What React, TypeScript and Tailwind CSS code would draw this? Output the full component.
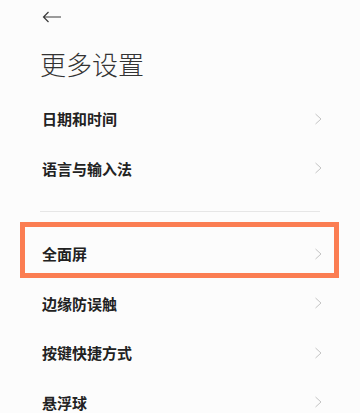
const font = { fontFamily: '"Noto Sans CJK SC", "Noto Sans", sans-serif' };

function Chevron() {
  return (
    <svg width="9" height="12" viewBox="0 0 9 12" fill="none" className="shrink-0">
      <path d="M1.5 1 L7 6 L1.5 11" stroke="#c4c4c4" strokeWidth="1" />
    </svg>
  );
}

function Row({ label, boxed }: { label: string; boxed?: boolean }) {
  return (
    <div className="relative flex h-[49.5px] items-center justify-between pl-[42px] pr-[37px]">
      <span className="text-[15px] font-semibold leading-none text-[#222]">{label}</span>
      <Chevron />
      {boxed && (
        <div className="pointer-events-none absolute -top-[7px] bottom-[1px] left-[20px] right-[21px] border-[5px] border-[#fb7d52]" />
      )}
    </div>
  );
}

export default function App() {
  return (
    <div className="h-[413px] w-[360px] overflow-hidden bg-[#fcfcfc]" style={font}>
      <div className="flex h-[34px] items-center pl-[42px]">
        <svg width="20" height="12" viewBox="0 0 20 12" fill="none">
          <path d="M19 6 H1.5 M6.5 1 L1.5 6 L6.5 11" stroke="#3a3a3a" strokeWidth="1.2" />
        </svg>
      </div>
      <div className="flex h-[60px] items-center pl-[40px]">
        <h1 className="text-[26px] font-light leading-none text-[#333]">更多设置</h1>
      </div>
      <Row label="日期和时间" />
      <Row label="语言与输入法" />
      <div className="flex h-[36px] items-center px-[40px]">
        <div className="h-px w-full bg-[#e6e6e6]" />
      </div>
      <Row label="全面屏" boxed />
      <Row label="边缘防误触" />
      <Row label="按键快捷方式" />
      <Row label="悬浮球" />
    </div>
  );
}
